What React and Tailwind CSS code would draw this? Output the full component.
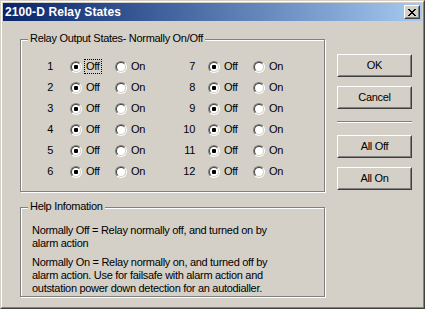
import React from "react";

function Radio({ checked }) {
  return (
    <span className="inline-block w-3 h-3 rounded-full border border-t-[#808080] border-l-[#808080] border-b-white border-r-white shrink-0">
      <span className="flex w-full h-full rounded-full border border-t-[#404040] border-l-[#404040] border-b-[#d4d0c8] border-r-[#d4d0c8] bg-white items-center justify-center">
        {checked && <span className="block w-1 h-1 bg-black rounded-[1px]" />}
      </span>
    </span>
  );
}

function Btn({ children }) {
  return (
    <div className="w-[75px] h-[23px] border border-t-white border-l-white border-b-[#404040] border-r-[#404040]">
      <div className="w-full h-full border border-t-[#d4d0c8] border-l-[#d4d0c8] border-b-[#808080] border-r-[#808080] flex items-center justify-center text-black">
        {children}
      </div>
    </div>
  );
}

function Row({ n, numW, gap, focus }) {
  return (
    <div className="flex items-center h-[21px]">
      <div className="text-right" style={{ width: numW }}>{n}</div>
      <div className="flex items-center" style={{ marginLeft: gap }}>
        <div className="flex items-center w-[45px]">
          <Radio checked />
          <span className={"ml-[3px] px-px leading-[13px] " + (focus ? "outline-1 outline-dotted outline-black" : "")}>Off</span>
        </div>
        <div className="flex items-center">
          <Radio />
          <span className="ml-[3px] px-px leading-[13px]">On</span>
        </div>
      </div>
    </div>
  );
}

function Group({ label, className, children }) {
  return (
    <div className={"relative border border-[#808080] shadow-[inset_1px_1px_0_#fff,1px_1px_0_#fff] " + className}>
      <span className="absolute left-[7px] -top-[8px] bg-[#d4d0c8] px-[2px] leading-[13px]">{label}</span>
      {children}
    </div>
  );
}

export default function App() {
  const font = { fontFamily: '"Liberation Sans", Arial, sans-serif' };
  return (
    <div className="w-[425px] h-[309px] bg-[#d4d0c8] text-[11px] tracking-[-0.3px] text-black" style={font}>
      <div className="w-full h-full border border-t-[#d4d0c8] border-l-[#d4d0c8] border-b-[#404040] border-r-[#404040]">
        <div className="w-full h-full border border-t-white border-l-white border-b-[#808080] border-r-[#808080] p-px flex flex-col">
          <div className="h-[18px] flex items-center justify-between bg-gradient-to-r from-[#0a246a] to-[#a6caf0] pl-[2px] pr-[2px]">
            <span className="text-white font-bold text-[12px] tracking-[0.1px] leading-none">2100-D Relay States</span>
            <div className="w-4 h-[14px] border border-t-white border-l-white border-b-[#404040] border-r-[#404040] bg-[#d4d0c8]">
              <div className="w-full h-full border border-t-[#d4d0c8] border-l-[#d4d0c8] border-b-[#808080] border-r-[#808080] flex items-center justify-center">
                <svg width="8" height="7" viewBox="0 0 8 7" shapeRendering="crispEdges">
                  <path d="M0 0h2v1H0zM6 0h2v1H6zM1 1h2v1H1zM5 1h2v1H5zM2 2h4v1H2zM3 3h2v1H3zM2 4h4v1H2zM1 5h2v1H1zM5 5h2v1H5zM0 6h2v1H0zM6 6h2v1H6z" fill="#000" />
                </svg>
              </div>
            </div>
          </div>
          <div className="flex pl-[17px] pt-[18px]">
            <div className="w-[305px] flex flex-col">
              <Group label="Relay Output States- Normally On/Off" className="h-[153px]">
                <div className="flex pt-[16px]">
                  <div className="w-[161px] pl-[19px]">
                    {[1, 2, 3, 4, 5, 6].map((n) => (
                      <Row key={n} n={n} numW={13} gap={17} focus={n === 1} />
                    ))}
                  </div>
                  <div>
                    {[7, 8, 9, 10, 11, 12].map((n) => (
                      <Row key={n} n={n} numW={13} gap={13} />
                    ))}
                  </div>
                </div>
              </Group>
              <Group label="Help Infomation" className="h-[90px] mt-[15px]">
                <div className="pl-[11px] pt-[16px] leading-[13px] pr-2">
                  <p>Normally Off = Relay normally off, and turned on by<br />alarm action</p>
                  <p className="mt-[6px]">Normally On = Relay normally on, and turned off by<br />alarm action. Use for failsafe with alarm action and<br />outstation power down detection for an autodialler.</p>
                </div>
              </Group>
            </div>
            <div className="ml-[12px] pt-[15px] flex flex-col">
              <Btn>OK</Btn>
              <div className="mt-[9px]"><Btn>Cancel</Btn></div>
              <div className="mt-[12px] h-[2px] w-[75px] border-t border-t-[#808080] border-b border-b-white" />
              <div className="mt-[12px]"><Btn>All Off</Btn></div>
              <div className="mt-[9px]"><Btn>All On</Btn></div>
            </div>
          </div>
        </div>
      </div>
    </div>
  );
}
